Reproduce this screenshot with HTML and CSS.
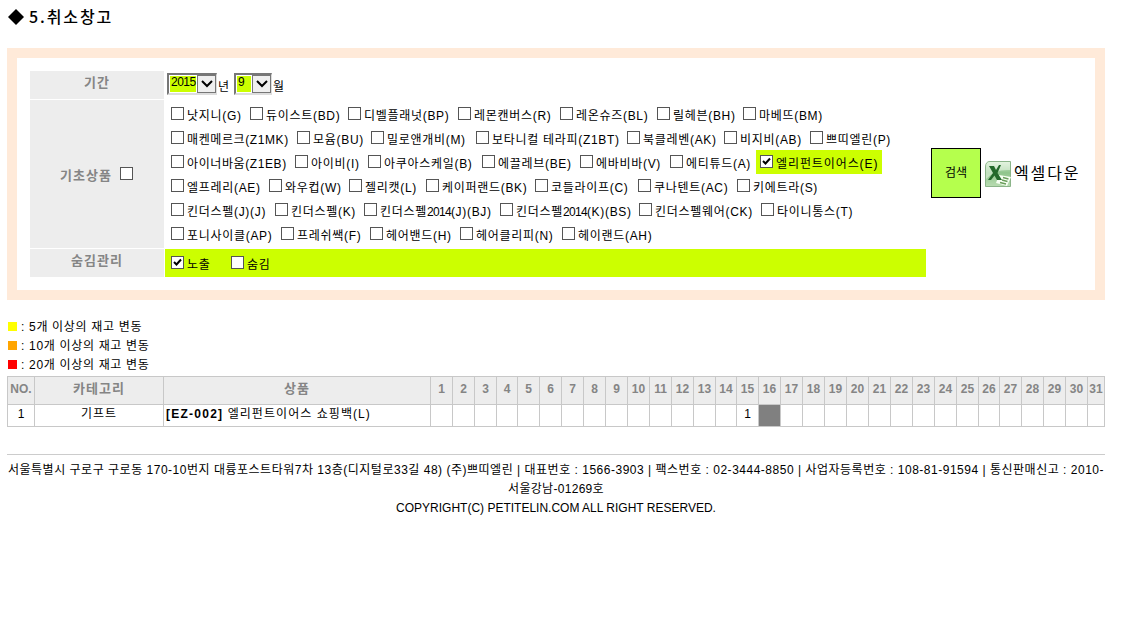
FILE: index.html
```html
<!DOCTYPE html>
<html lang="ko">
<head>
<meta charset="utf-8">
<title>5.취소창고</title>
<link rel="stylesheet" href="styles.css">
</head>
<body>
<h1 class="title"><svg class="diamond" width="16" height="16" viewBox="0 0 16 16"><path d="M8 0L16 8L8 16L0 8Z"/></svg><span>5.취소창고</span></h1>

<form class="panel">
  <div class="filters">
    <div class="head">기간</div>
    <div class="period">
      <span class="select year"><span class="value">2015</span><span class="arrow"><svg width="12" height="8" viewBox="0 0 12 8"><path d="M1 1L6 6L11 1"/></svg></span></span><span class="unit">년</span>
      <span class="select month"><span class="value">9</span><span class="arrow"><svg width="12" height="8" viewBox="0 0 12 8"><path d="M1 1L6 6L11 1"/></svg></span></span><span class="unit">월</span>
    </div>
    <div class="head tall"><span>기초상품</span><i class="box"></i></div>
    <div class="brands">
      <div class="row r1"><label><i class="box"></i>낫지니(G)</label><label><i class="box"></i>듀이스트(BD)</label><label><i class="box"></i>디벨플래넛(BP)</label><label><i class="box"></i>레몬캔버스(R)</label><label><i class="box"></i>레온슈즈(BL)</label><label><i class="box"></i>릴헤븐(BH)</label><label><i class="box"></i>마베뜨(BM)</label></div>
      <div class="row r2"><label><i class="box"></i>매켄메르크(Z1MK)</label><label><i class="box"></i>모윰(BU)</label><label><i class="box"></i>밀로앤개비(M)</label><label><i class="box"></i>보타니컬 테라피(Z1BT)</label><label><i class="box"></i>북클레벤(AK)</label><label><i class="box"></i>비지비(AB)</label><label><i class="box"></i>쁘띠엘린(P)</label></div>
      <div class="row r3"><label><i class="box"></i>아이너바움(Z1EB)</label><label><i class="box"></i>아이비(I)</label><label><i class="box"></i>아쿠아스케일(B)</label><label><i class="box"></i>에끌레브(BE)</label><label><i class="box"></i>에바비바(V)</label><label><i class="box"></i>에티튜드(A)</label><label class="picked"><i class="box"><svg width="11" height="11" viewBox="0 0 11 11"><path d="M2 5L4.5 7.5L9 2.5"/></svg></i>엘리펀트이어스(E)</label></div>
      <div class="row r4"><label><i class="box"></i>엘프레리(AE)</label><label><i class="box"></i>와우컵(W)</label><label><i class="box"></i>젤리캣(L)</label><label><i class="box"></i>케이퍼랜드(BK)</label><label><i class="box"></i>코들라이프(C)</label><label><i class="box"></i>쿠나텐트(AC)</label><label><i class="box"></i>키에트라(S)</label></div>
      <div class="row r5"><label><i class="box"></i>킨더스펠(J)(J)</label><label><i class="box"></i>킨더스펠(K)</label><label><i class="box"></i><span>킨더스펠<b class="num">2014</b>(J)(BJ)</span></label><label><i class="box"></i><span>킨더스펠<b class="num">2014</b>(K)(BS)</span></label><label><i class="box"></i>킨더스펠웨어(CK)</label><label><i class="box"></i>타이니통스(T)</label></div>
      <div class="row r6"><label><i class="box"></i>포니사이클(AP)</label><label><i class="box"></i>프레쉬쌕(F)</label><label><i class="box"></i>헤어밴드(H)</label><label><i class="box"></i>헤어클리피(N)</label><label><i class="box"></i>헤이랜드(AH)</label></div>
    </div>
    <div class="head">숨김관리</div>
    <div class="visibility"><label><i class="box"><svg width="11" height="11" viewBox="0 0 11 11"><path d="M2 5L4.5 7.5L9 2.5"/></svg></i>노출</label><label><i class="box"></i>숨김</label></div>
  </div>
  <div class="search">검색</div>
  <div class="excel">
    <svg width="26" height="26" viewBox="0 0 26 26">
      <defs><linearGradient id="g" x1="0" y1="0" x2="0" y2="1"><stop offset="0" stop-color="#d9eed4"/><stop offset=".45" stop-color="#8fc58c"/><stop offset="1" stop-color="#b9dcb2"/></linearGradient></defs>
      <path d="M5 .5H25.5V25.5H.5V6Q.5 .5 5 .5Z" fill="url(#g)" stroke="#8bb489"/>
      <path d="M1 18Q10 8 25 9V1H5Q1 1 1 6Z" fill="#edf7e9" opacity=".55"/>
      <path d="M14 14L26 16L22 25L11 22Z" fill="#f7fff3"/>
      <path d="M18 16.500L23.500 18M17 19L22.500 20.500M15 21.500L21 23" stroke="#6a9e5c" stroke-width="1.3"/>
      <path d="M4 5H9L11 9L14 4H16L12.500 12L17 19H12L9.500 14.500L6 19H3L8 12Z" fill="#23692a"/>
    </svg><span>엑셀다운</span>
  </div>
</form>

<ul class="legend">
  <li><i class="yellow"></i><span>: 5개 이상의 재고 변동</span></li>
  <li><i class="orange"></i><span>: 10개 이상의 재고 변동</span></li>
  <li><i class="red"></i><span>: 20개 이상의 재고 변동</span></li>
</ul>

<table class="stock">
  <colgroup><col class="c-no"><col class="c-cat"><col class="c-item"><col span="3"><col class="slim"><col span="9"><col class="slim"><col span="11"><col class="slim"><col span="4"><col class="last"></colgroup>
  <thead><tr><th>NO.</th><th class="word">카테고리</th><th class="word">상품</th><th>1</th><th>2</th><th>3</th><th>4</th><th>5</th><th>6</th><th>7</th><th>8</th><th>9</th><th>10</th><th>11</th><th>12</th><th>13</th><th>14</th><th>15</th><th>16</th><th>17</th><th>18</th><th>19</th><th>20</th><th>21</th><th>22</th><th>23</th><th>24</th><th>25</th><th>26</th><th>27</th><th>28</th><th>29</th><th>30</th><th>31</th></tr></thead>
  <tbody><tr><td>1</td><td class="category">기프트</td><td class="item"><strong>[EZ-002]</strong> <span>엘리펀트이어스 쇼핑백(L)</span></td><td></td><td></td><td></td><td></td><td></td><td></td><td></td><td></td><td></td><td></td><td></td><td></td><td></td><td></td><td>1</td><td class="today"></td><td></td><td></td><td></td><td></td><td></td><td></td><td></td><td></td><td></td><td></td><td></td><td></td><td></td><td></td><td></td></tr></tbody>
</table>

<footer class="footer">
  <p class="addr">서울특별시 구로구 구로동 170-10번지 대륭포스트타워7차 13층(디지털로33길 48) (주)쁘띠엘린 | 대표번호 : 1566-3903 | 팩스번호 : 02-3444-8850 | 사업자등록번호 : 108-81-91594 | 통신판매신고 : 2010-</p>
  <p class="rest">서울강남-01269호</p>
  <p class="copy">COPYRIGHT(C) PETITELIN.COM ALL RIGHT RESERVED.</p>
</footer>
</body>
</html>
```
FILE: styles.css
```css
* { box-sizing: border-box; }
body {
  margin: 0;
  padding: 7px 0 0 7px;
  background: #fff;
  color: #000;
  font: 12px/19px "Liberation Sans", "Noto Sans CJK KR", sans-serif;
  white-space: nowrap;
}
.title {
  display: flex;
  align-items: center;
  gap: 5px;
  height: 20px;
  margin: 0 0 21px;
  font-family: "Noto Sans CJK KR", sans-serif;
  font-size: 16px;
  font-weight: 500;
  letter-spacing: 1.9px;
  line-height: 18px;
}
.title span { padding-bottom: 2px; }
.diamond { margin-left: 1px; }

.panel {
  display: flex;
  align-items: center;
  width: 1098px;
  height: 252px;
  padding: 0 13px;
  border: 10px solid #ffead9;
}
.filters {
  display: grid;
  grid-template-columns: 134px 761px;
  grid-template-rows: 28px 148px 28px;
  gap: 1px;
}
.head {
  padding-top: 2px;
  background: #ededed;
  color: #858585;
  font-weight: 700;
  font-size: 13px;
  letter-spacing: 1px;
  text-align: center;
}
.head.tall {
  display: flex;
  align-items: center;
  justify-content: center;
  gap: 8px;
  padding: 2px 1px 0 0;
}
.box {
  display: block;
  flex: none;
  width: 13px;
  height: 13px;
  border: 1px solid #555;
  background: #fff;
}
.tall .box { margin-bottom: 4px; }
.box svg { display: block; }
.box path { fill: none; stroke: #000; stroke-width: 2; }

.period { display: flex; align-items: flex-start; padding: 2px 0 0 2px; }
.select {
  display: flex;
  height: 22px;
  border: 2px solid;
  border-color: #777 #ddd #ddd #777;
  border-right-width: 1px;
}
.year { width: 50px; }
.month { width: 38px; margin-left: 5px; }
.value {
  flex: 1;
  height: 16px;
  margin: 1px;
  padding-left: 1px;
  background: #cf0;
  line-height: 12px;
  letter-spacing: -0.5px;
}
.arrow {
  display: grid;
  place-items: center;
  width: 19px;
  border: 1px solid #777;
  background: #efefef;
}
.arrow path { fill: none; stroke: #000; stroke-width: 2; }
.unit { padding: 5px 0 0 1px; }

.brands { padding: 2px 0 0 2px; }
.row { display: grid; height: 24px; }
.row label, .visibility label {
  display: flex;
  gap: 3px;
  height: 24px;
  padding-left: 4px;
  line-height: 29px;
  letter-spacing: 0.7px;
}
.row .box { margin-top: 5px; }
.num { font-weight: 400; letter-spacing: -0.7px; }
.r1 { grid-template-columns: 79px 98px 110px 102px 97px 86px 85px; }
.r2 { grid-template-columns: 126px 74px 105px 151px 97px 86px 85px; }
.r2 label:first-child, .r3 label:first-child { letter-spacing: 0.6px; }
.r3 { grid-template-columns: 124px 73px 114px 98px 90px 90px 126px; }
.r4 { grid-template-columns: 98px 80px 77px 109px 103px 99px 85px; }
.r5 { grid-template-columns: 104px 89px 136px 139px 122px 97px; }
.r6 { grid-template-columns: 110px 89px 90px 102px 90px; }
.row .picked { background: #cf0; letter-spacing: 0.9px; }

.visibility {
  display: flex;
  padding-left: 2px;
  background: #cf0;
}
.visibility label { width: 60px; padding-top: 3px; line-height: 27px; }
.visibility .box { margin-top: 4px; }

.search {
  width: 50px;
  height: 50px;
  margin: 0 0 2px 5px;
  border: 1px solid #000;
  background: #b5ff4d;
  line-height: 48px;
  text-align: center;
}
.excel {
  display: flex;
  align-items: center;
  gap: 3px;
  margin: 0 0 1px 4px;
  font-size: 16px;
  letter-spacing: 1.9px;
}

.legend { margin: 16px 0 3px; padding: 0; list-style: none; }
.legend li {
  display: flex;
  align-items: center;
  gap: 4px;
  height: 19px;
  letter-spacing: 0.68px;
}
.legend span { padding-top: 4px; }
.legend i { width: 9px; height: 9px; margin: 1px 0 0 1px; }
.yellow { background: #ff0; }
.orange { background: orange; }
.red { background: red; }

.stock {
  width: 1098px;
  table-layout: fixed;
  border-spacing: 0;
  border: solid #c8c8c8;
  border-width: 1px 0 0 1px;
}
.stock col { width: 22px; }
.stock .c-no { width: 27px; }
.stock .c-cat { width: 129px; }
.stock .c-item { width: 267px; }
.stock .slim { width: 21px; }
.stock .last { width: 17px; }
.stock th, .stock td {
  padding: 0;
  border: solid #c8c8c8;
  border-width: 0 1px 1px 0;
  text-align: center;
}
.stock th {
  height: 28px;
  padding-bottom: 4px;
  background: #ededed;
  color: #858585;
  line-height: 18px;
}
.stock .word { font-size: 13px; letter-spacing: 1px; }
.stock td { height: 22px; padding-bottom: 2px; line-height: 17px; }
.stock .category { letter-spacing: 1px; }
.stock .item { padding-left: 2px; text-align: left; }
.item strong { letter-spacing: 1.25px; }
.item span { margin-left: 1px; letter-spacing: 1.05px; }
.stock .today { background: #808080; }

.footer {
  width: 1098px;
  margin-top: 27px;
  padding-top: 6px;
  border-top: 1px solid #ccc;
  text-align: center;
}
.footer p { margin: 0; }
.addr { letter-spacing: 0.51px; }
.rest { letter-spacing: 0.3px; }
```
